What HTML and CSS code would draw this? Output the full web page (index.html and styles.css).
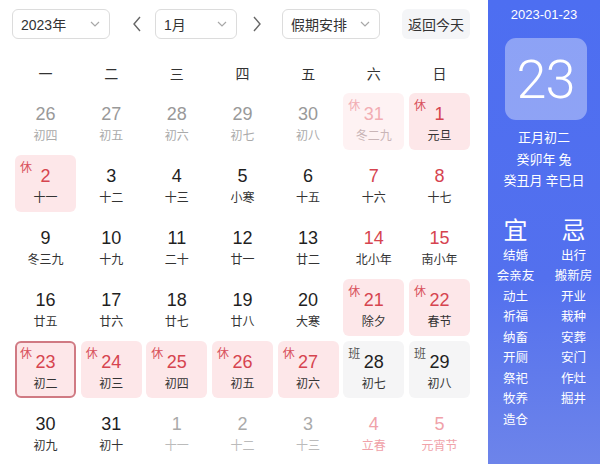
FILE: index.html
```html
<!DOCTYPE html>
<html lang="zh-CN">
<head>
<meta charset="utf-8">
<title>万年历</title>
<link rel="stylesheet" href="styles.css">
</head>
<body>
<div class="app">
  <main class="cal">
    <div class="toolbar">
      <div class="select sel-year"><span>2023年</span><svg class="chev" viewBox="0 0 10 6"><path d="M1 1l4 4 4-4"/></svg></div>
      <svg class="arrow arrow-prev" viewBox="0 0 10 16"><path d="M8 1L2 8l6 7"/></svg>
      <div class="select sel-month"><span>1月</span><svg class="chev" viewBox="0 0 10 6"><path d="M1 1l4 4 4-4"/></svg></div>
      <svg class="arrow arrow-next" viewBox="0 0 10 16"><path d="M2 1l6 7-6 7"/></svg>
      <div class="select sel-hol"><span>假期安排</span><svg class="chev" viewBox="0 0 10 6"><path d="M1 1l4 4 4-4"/></svg></div>
      <div class="btn-today">返回今天</div>
    </div>
    <div class="weekdays">
      <span>一</span><span>二</span><span>三</span><span>四</span><span>五</span><span>六</span><span>日</span>
    </div>
    <div class="grid">
      <div class="cell other"><b>26</b><i>初四</i></div>
      <div class="cell other"><b>27</b><i>初五</i></div>
      <div class="cell other"><b>28</b><i>初六</i></div>
      <div class="cell other"><b>29</b><i>初七</i></div>
      <div class="cell other"><b>30</b><i>初八</i></div>
      <div class="cell rest other-rest"><em>休</em><b>31</b><i>冬二九</i></div>
      <div class="cell rest"><em>休</em><b>1</b><i>元旦</i></div>

      <div class="cell rest"><em>休</em><b>2</b><i>十一</i></div>
      <div class="cell"><b>3</b><i>十二</i></div>
      <div class="cell"><b>4</b><i>十三</i></div>
      <div class="cell"><b>5</b><i>小寒</i></div>
      <div class="cell"><b>6</b><i>十五</i></div>
      <div class="cell weekend"><b>7</b><i>十六</i></div>
      <div class="cell weekend"><b>8</b><i>十七</i></div>

      <div class="cell"><b>9</b><i>冬三九</i></div>
      <div class="cell"><b>10</b><i>十九</i></div>
      <div class="cell"><b>11</b><i>二十</i></div>
      <div class="cell"><b>12</b><i>廿一</i></div>
      <div class="cell"><b>13</b><i>廿二</i></div>
      <div class="cell weekend"><b>14</b><i>北小年</i></div>
      <div class="cell weekend"><b>15</b><i>南小年</i></div>

      <div class="cell"><b>16</b><i>廿五</i></div>
      <div class="cell"><b>17</b><i>廿六</i></div>
      <div class="cell"><b>18</b><i>廿七</i></div>
      <div class="cell"><b>19</b><i>廿八</i></div>
      <div class="cell"><b>20</b><i>大寒</i></div>
      <div class="cell rest"><em>休</em><b>21</b><i>除夕</i></div>
      <div class="cell rest"><em>休</em><b>22</b><i>春节</i></div>

      <div class="cell rest today"><em>休</em><b>23</b><i>初二</i></div>
      <div class="cell rest"><em>休</em><b>24</b><i>初三</i></div>
      <div class="cell rest"><em>休</em><b>25</b><i>初四</i></div>
      <div class="cell rest"><em>休</em><b>26</b><i>初五</i></div>
      <div class="cell rest"><em>休</em><b>27</b><i>初六</i></div>
      <div class="cell work"><em>班</em><b>28</b><i>初七</i></div>
      <div class="cell work"><em>班</em><b>29</b><i>初八</i></div>

      <div class="cell"><b>30</b><i>初九</i></div>
      <div class="cell"><b>31</b><i>初十</i></div>
      <div class="cell next"><b>1</b><i>十一</i></div>
      <div class="cell next"><b>2</b><i>十二</i></div>
      <div class="cell next"><b>3</b><i>十三</i></div>
      <div class="cell next next-we"><b>4</b><i>立春</i></div>
      <div class="cell next next-we"><b>5</b><i>元宵节</i></div>
    </div>
  </main>
  <aside class="side">
    <div class="side-date">2023-01-23</div>
    <div class="side-day">23</div>
    <div class="side-lunar">
      <div>正月初二</div>
      <div>癸卯年 兔</div>
      <div>癸丑月 辛巳日</div>
    </div>
    <div class="yiji">
      <div class="col">
        <div class="big">宜</div>
        <div>结婚</div><div>会亲友</div><div>动土</div><div>祈福</div><div>纳畜</div><div>开厕</div><div>祭祀</div><div>牧养</div><div>造仓</div>
      </div>
      <div class="col">
        <div class="big">忌</div>
        <div>出行</div><div>搬新房</div><div>开业</div><div>栽种</div><div>安葬</div><div>安门</div><div>作灶</div><div>掘井</div>
      </div>
    </div>
  </aside>
</div>
</body>
</html>
```

FILE: styles.css
```css
* { box-sizing: border-box; }
html, body { margin: 0; padding: 0; }
body {
  width: 600px;
  height: 464px;
  overflow: hidden;
  background: #fff;
  font-family: "Liberation Sans", "Noto Sans CJK SC", sans-serif;
  color: #222;
}
.app { display: flex; width: 600px; height: 464px; }
.cal { width: 488px; flex: none; }

.toolbar {
  display: flex;
  align-items: center;
  height: 30px;
  margin-top: 9px;
  padding-left: 12px;
}
.select {
  display: flex;
  align-items: center;
  justify-content: space-between;
  height: 30px;
  border: 1px solid #dcdcdc;
  border-radius: 6px;
  padding: 0 9px 0 8px;
  font-size: 14px;
  color: #333;
}
.sel-year { width: 98px; }
.sel-month { width: 82px; }
.sel-hol { width: 98px; margin-left: 20px; }
.chev { width: 10px; height: 6px; fill: none; stroke: #a8a8a8; stroke-width: 1.2; }
.arrow { width: 10px; height: 16px; fill: none; stroke: #666; stroke-width: 1.4; }
.arrow-prev { margin: 0 13px 0 22px; }
.arrow-next { margin: 0 0 0 15px; }
.btn-today {
  margin-left: 22px;
  width: 68px;
  height: 30px;
  border-radius: 6px;
  background: #f4f5f7;
  font-size: 14px;
  color: #333;
  display: flex;
  align-items: center;
  justify-content: center;
}

.weekdays {
  display: grid;
  grid-template-columns: repeat(7, 61px);
  column-gap: 4.67px;
  margin: 20px 0 0 15px;
  height: 28px;
  align-items: center;
  font-family: "Noto Sans CJK SC", sans-serif;
  font-size: 14px;
  color: #333;
  text-align: center;
}

.grid {
  display: grid;
  grid-template-columns: repeat(7, 61px);
  grid-auto-rows: 57px;
  column-gap: 4.67px;
  row-gap: 5px;
  margin: 6px 0 0 15px;
}
.cell {
  position: relative;
  border-radius: 6px;
  text-align: center;
  padding-top: 10px;
}
.cell b {
  display: block;
  font-weight: normal;
  font-size: 18px;
  line-height: 22px;
  color: #1f1f1f;
}
.cell i {
  display: block;
  font-style: normal;
  font-family: "Noto Sans CJK SC", sans-serif;
  font-size: 12px;
  line-height: 16px;
  margin-top: 2px;
  color: #333;
}
.cell em {
  position: absolute;
  left: 5px;
  top: 4px;
  font-style: normal;
  font-family: "Noto Sans CJK SC", sans-serif;
  font-size: 12px;
  line-height: 16px;
  color: #d8505a;
}
.other b { color: #999; }
.other i { color: #aaa; }
.next b { color: #aaa; }
.next i { color: #bbb; }
.next-we b, .next-we i { color: #f0a2a9; }
.weekend b { color: #d6444f; }

.rest { background: #fde7e9; }
.rest b { color: #d6444f; }
.other-rest { background: #fef2f3; }
.other-rest b, .other-rest em { color: #f2adb3; }
.other-rest i { color: #c9b5b7; }
.today { border: 2px solid #d07a83; padding-top: 8px; }
.today em { left: 3px; top: 2px; }
.work { background: #f5f5f6; }
.work em { color: #555; }

.side {
  width: 112px;
  flex: none;
  height: 464px;
  background: linear-gradient(180deg, #4d6ef1 0%, #5370ee 60%, #6d84ea 100%);
  color: #fff;
  font-family: "Liberation Sans", "Noto Sans CJK SC", sans-serif;
  display: flex;
  flex-direction: column;
  align-items: center;
}
.side-date {
  margin-top: 6px;
  font-size: 13px;
  line-height: 18px;
}
.side-day {
  margin-top: 14px;
  margin-left: 3px;
  width: 82px;
  height: 82px;
  border-radius: 11px;
  background: rgba(255, 255, 255, 0.36);
  font-family: "Roboto", "Liberation Sans", sans-serif;
  font-weight: 300;
  font-size: 54px;
  letter-spacing: -1px;
  display: flex;
  align-items: center;
  justify-content: center;
}
.side-lunar {
  margin-top: 6px;
  text-align: center;
  font-family: "Noto Sans CJK SC", sans-serif;
  font-size: 13px;
  line-height: 21.5px;
}
.yiji {
  display: grid;
  grid-template-columns: 55px 55px;
  column-gap: 3px;
  margin-top: 24px;
  width: 112px;
  font-family: "Noto Sans CJK SC", sans-serif;
  font-size: 12.5px;
  line-height: 20.5px;
}
.col { display: flex; flex-direction: column; align-items: center; }
.big { font-size: 24px; line-height: 28px; margin-bottom: 2px; }
```
